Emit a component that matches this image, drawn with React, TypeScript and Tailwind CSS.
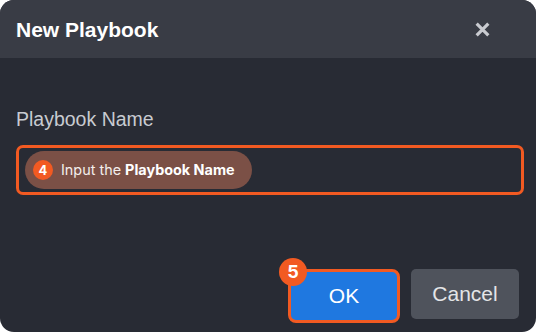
import React from "react";

export default function App() {
  return (
    <div className="w-[536px] h-[332px] bg-white">
      <div className="h-full w-full rounded-[14px] overflow-hidden bg-[#282b34] flex flex-col">
        <div className="h-[58px] shrink-0 bg-[#393c45] flex items-center justify-between pl-[16px] pr-[45px]">
          <div className="text-[21px] font-bold text-white font-['Liberation_Sans',Arial,sans-serif] leading-none">
            New Playbook
          </div>
          <svg width="17" height="17" viewBox="0 0 16 16" className="mt-[1px]">
            <path d="M2.5 2.5 L13.5 13.5 M13.5 2.5 L2.5 13.5" stroke="#c9cbd0" strokeWidth="3" strokeLinecap="butt" />
          </svg>
        </div>
        <div className="flex flex-col">
          <div className="mt-[50px] pl-[16px] text-[19.5px] leading-[22px] text-[#c8cbd1] font-['Liberation_Sans',Arial,sans-serif]">
            Playbook Name
          </div>
          <div className="mt-[15px] ml-[16px] w-[508px] h-[50px] border-[3px] border-[#f25a22] rounded-[7px] flex items-center pl-[6px]">
            <div className="h-[38px] w-[227px] rounded-full bg-[#7b5046] flex items-center pl-[8px] gap-[8px] font-['Inter',sans-serif]">
              <div className="w-[20px] h-[20px] rounded-full bg-[#f25a22] text-white text-[13px] font-bold flex items-center justify-center leading-none">
                4
              </div>
              <div className="text-[14.4px] text-[#f3eeec] whitespace-nowrap">
                Input the <span className="font-bold text-white">Playbook Name</span>
              </div>
            </div>
          </div>
          <div className="mt-[74px] flex justify-end items-start pr-[17px] gap-[11px] font-['Liberation_Sans',Arial,sans-serif]">
            <div className="relative">
              <div className="w-[112px] h-[54px] border-[3px] border-[#f25a22] rounded-[8px] bg-[#1f78e0] flex items-center justify-center text-white text-[21px]">
                OK
              </div>
              <div className="absolute left-[-9px] top-[-11px] w-[28px] h-[28px] rounded-full bg-[#f25a22] text-white text-[18px] font-bold flex items-center justify-center font-['Inter',sans-serif] leading-none">
                5
              </div>
            </div>
            <div className="w-[108px] h-[50px] rounded-[5px] bg-[#4f535c] flex items-center justify-center text-[#e4e5e7] text-[21px]">
              Cancel
            </div>
          </div>
        </div>
      </div>
    </div>
  );
}
